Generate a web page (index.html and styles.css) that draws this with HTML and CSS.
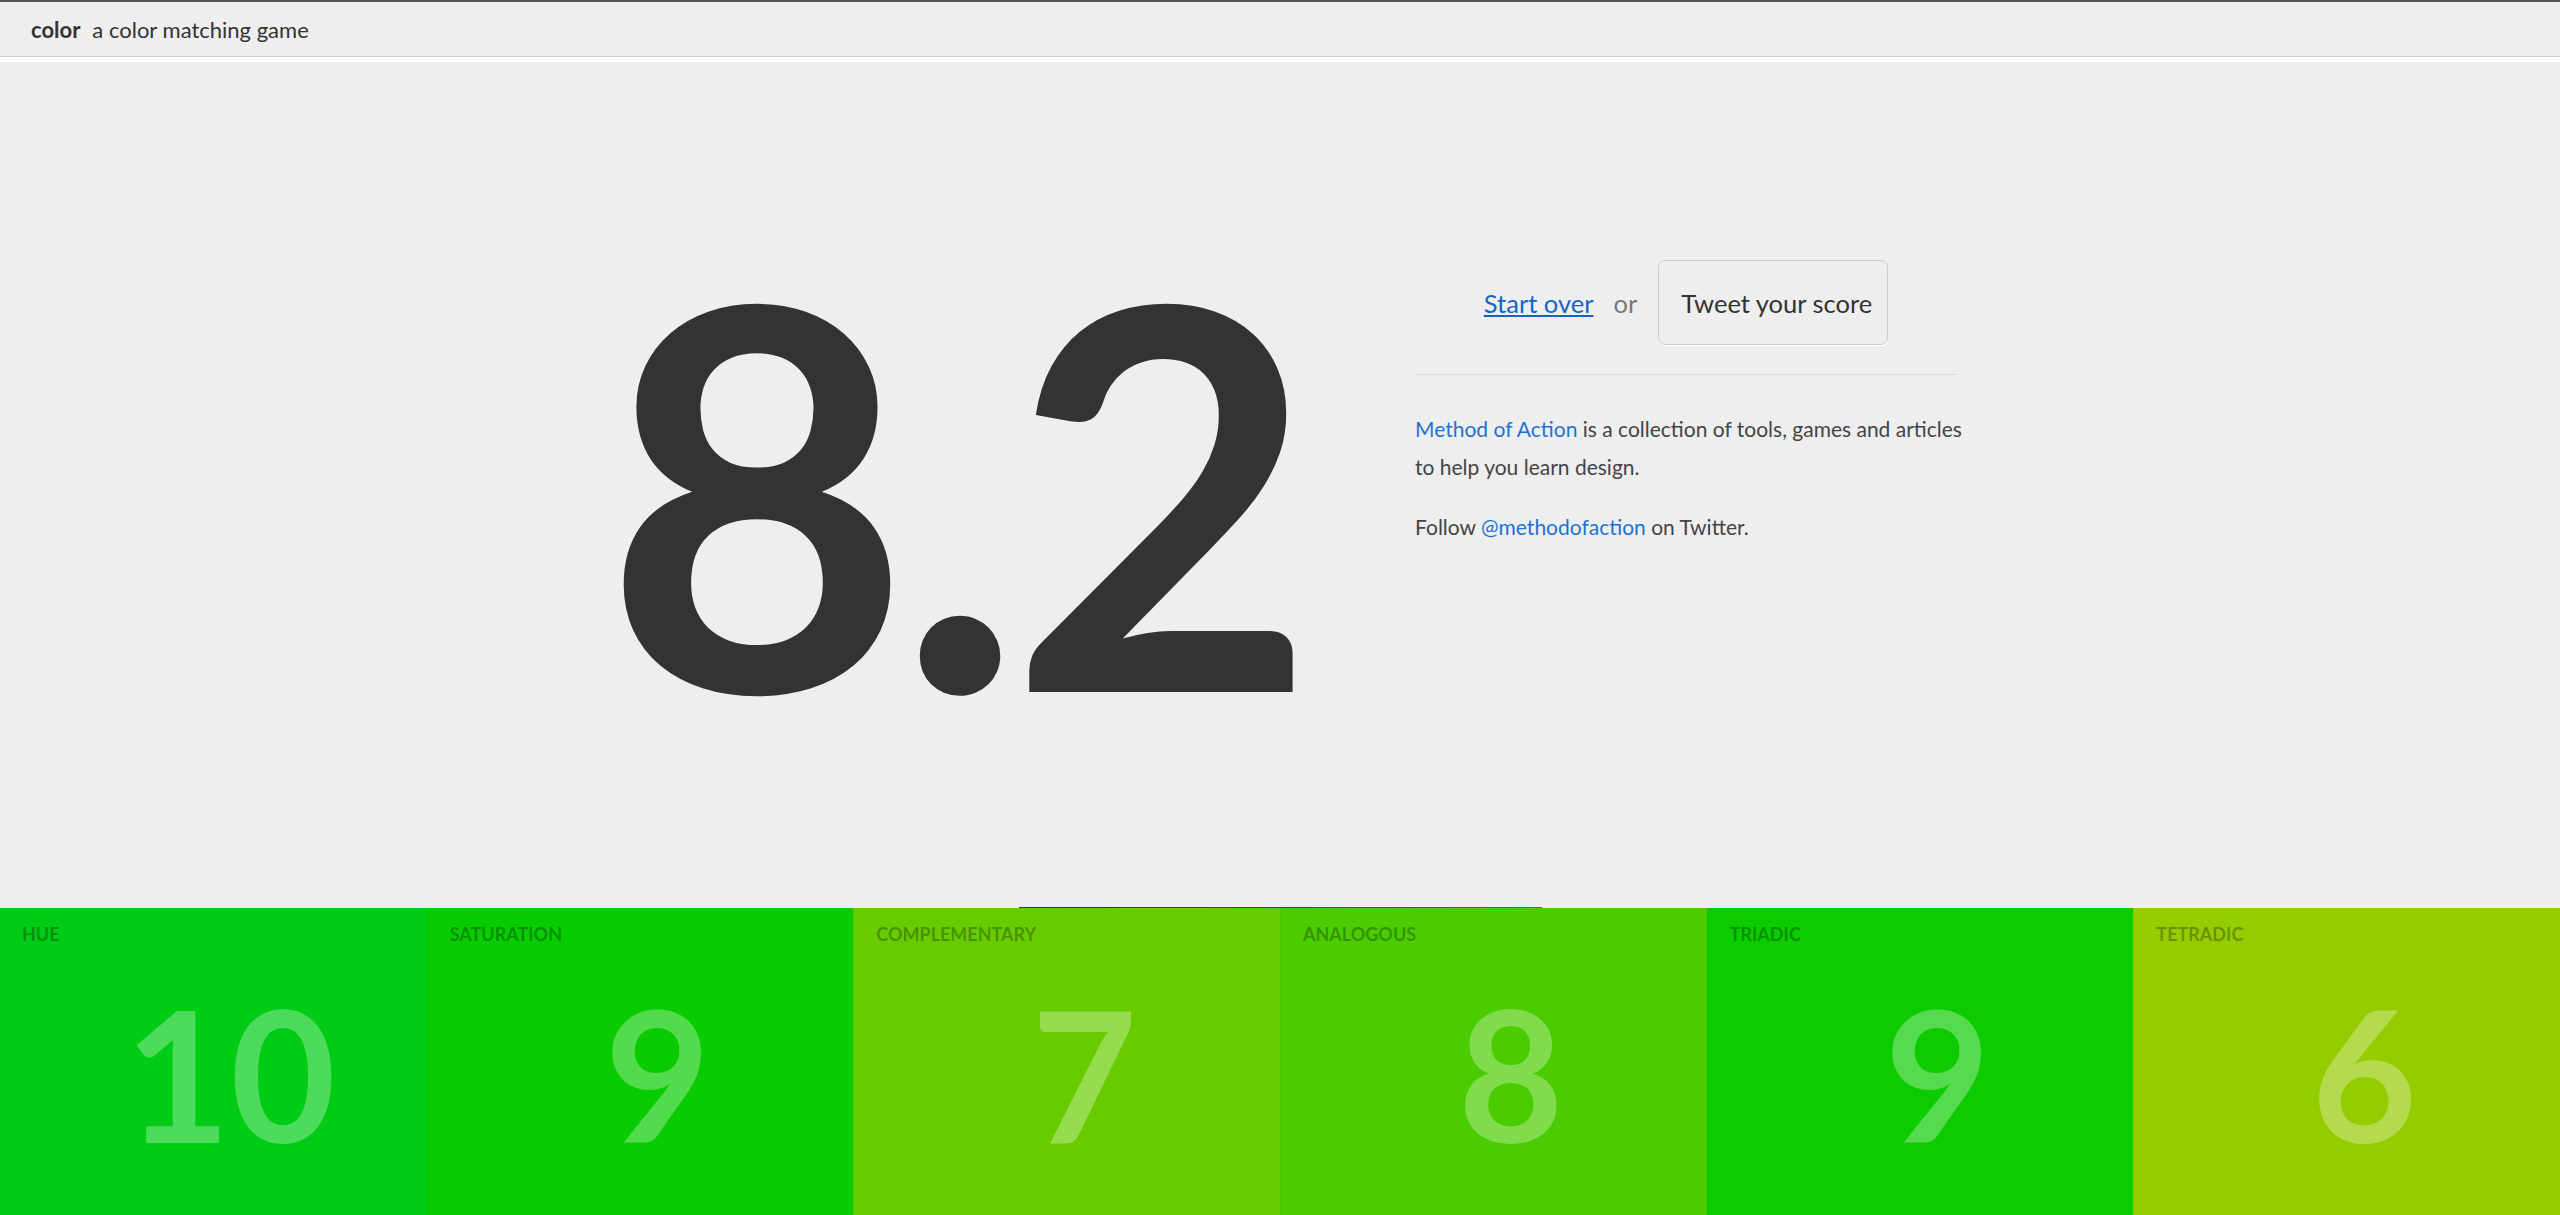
FILE: index.html
```html
<!DOCTYPE html>
<html lang="en">
<head>
<meta charset="utf-8">
<title>color — a color matching game</title>
<link rel="stylesheet" href="styles.css">
</head>
<body>
<header class="topbar">
  <span class="brand">color</span><span class="tagline">a color matching game</span>
</header>
<main class="stage">
  <div class="result">
    <div class="score">8.2</div>
    <aside class="panel">
      <div class="actions">
        <a class="restart" href="#">Start over</a>
        <span class="or">or</span>
        <button class="tweet" type="button">Tweet your score</button>
      </div>
      <hr class="rule">
      <p class="about"><a href="#">Method of Action</a> is a collection of tools, games and articles<br>to help you learn design.</p>
      <p class="about">Follow <a href="#">@methodofaction</a> on Twitter.</p>
    </aside>
  </div>
  <div class="spectrum"></div>
</main>
<section class="tiles">
  <div class="tile t-hue"><div class="label">HUE</div><div class="num">10</div></div>
  <div class="tile t-sat"><div class="label">SATURATION</div><div class="num">9</div></div>
  <div class="tile t-comp"><div class="label">COMPLEMENTARY</div><div class="num">7</div></div>
  <div class="tile t-ana"><div class="label">ANALOGOUS</div><div class="num">8</div></div>
  <div class="tile t-tri"><div class="label">TRIADIC</div><div class="num">9</div></div>
  <div class="tile t-tet"><div class="label">TETRADIC</div><div class="num">6</div></div>
</section>
</body>
</html>
```

FILE: styles.css
```css
* { box-sizing: border-box; }
html, body { margin: 0; padding: 0; }
body {
  background: #fff;
  font-family: Lato, "Open Sans", sans-serif;
  color: #333;
  height: 1215px;
  overflow: hidden;
}
.topbar {
  height: 57px;
  border-top: 2px solid #555;
  border-bottom: 1px solid #ccc;
  background: #eee;
  display: flex;
  align-items: center;
  padding-left: 31px;
  font-size: 22px;
  color: #333;
}
.brand { font-weight: bold; margin-right: 12px; }
.stage {
  margin-top: 5px;
  height: 846px;
  background: #eee;
  display: flex;
  flex-direction: column;
}
.result {
  flex: 1;
  display: flex;
  justify-content: center;
  align-items: flex-start;
  gap: 112px;
  padding-top: 159px;
}
.score {
  font-size: 531px;
  font-weight: bold;
  line-height: 1;
  color: #333;
  letter-spacing: -14px;
}
.panel {
  width: 542px;
  margin-top: 39px;
}
.actions {
  display: flex;
  align-items: center;
  justify-content: center;
  font-size: 25.5px;
}
.restart { color: #1565c8; text-decoration: underline; }
.or { color: #777; margin: 0 21px 0 20px; }
.tweet {
  font: inherit;
  color: #333;
  background: #eee;
  border: 1px solid #ccc;
  border-radius: 7px;
  box-shadow: 0 1px 0 #fff;
  height: 85px;
  padding: 0 15px 0 22px;
}
.rule {
  border: 0;
  border-top: 1px solid #ddd;
  margin: 29px 0 35px;
}
.about {
  font-size: 21px;
  line-height: 38px;
  margin: 0 0 22px;
  color: #444;
  white-space: nowrap;
}
.about a { color: #1f72d4; text-decoration: none; }
.spectrum {
  align-self: center;
  width: 523px;
  height: 1px;
  background: linear-gradient(to right, #0030ee, #7a10c8 50%, #ff00cc);
}
.tiles {
  display: grid;
  grid-template-columns: repeat(6, 1fr);
  height: 307px;
}
.tile {
  padding: 15px 22px 0;
  border-left: 1px solid rgba(0,0,0,0.04);
  overflow: hidden;
}
.tile:first-child { border-left: 0; }
.label {
  font-size: 18px;
  font-weight: bold;
  color: rgba(0,0,0,0.3);
  line-height: 22px;
}
.num {
  font-size: 182px;
  font-weight: bold;
  line-height: 1;
  text-align: center;
  color: rgba(255,255,255,0.3);
  padding-left: 34px;
  margin-top: 37px;
}
.t-hue { background: #00cc16; }
.t-sat { background: #08cc00; }
.t-comp { background: #66cc00; }
.t-ana { background: #4acc00; }
.t-tri { background: #0ccc00; }
.t-tet { background: #94cc00; }
```
